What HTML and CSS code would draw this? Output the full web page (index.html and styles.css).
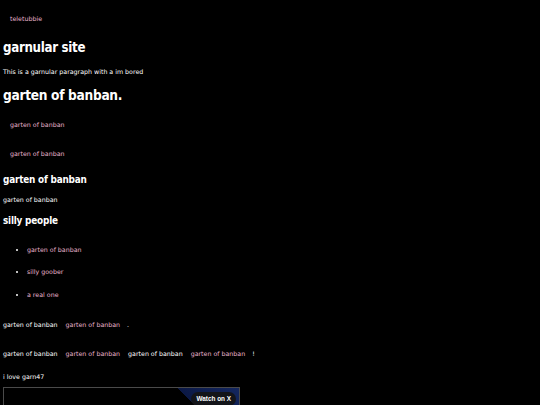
FILE: index.html
```html
<!DOCTYPE html>
<html>
<head>
<meta charset="utf-8">
<link rel="stylesheet" href="styles.css">
</head>
<body>
<nav class="nav"><a class="link" href="#">teletubbie</a></nav>
<h1 class="title">garnular site</h1>
<p class="text p-intro">This is a garnular paragraph with a im bored</p>
<h1 class="title title-2">garten of banban.</h1>
<div class="block block-1"><a class="link" href="#">garten of banban</a></div>
<div class="block block-2"><a class="link" href="#">garten of banban</a></div>
<h2 class="sub">garten of banban</h2>
<p class="text p-after">garten of banban</p>
<h2 class="sub sub-2">silly people</h2>
<ul class="list">
  <li><a class="link" href="#">garten of banban</a></li>
  <li><a class="link" href="#">silly goober</a></li>
  <li><a class="link" href="#">a real one</a></li>
</ul>
<div class="row row-1">
  <span>garten of banban</span>
  <a class="link" href="#">garten of banban</a>
  <span class="mark">.</span>
</div>
<div class="row row-2">
  <span>garten of banban</span>
  <a class="link" href="#">garten of banban</a>
  <span>garten of banban</span>
  <a class="link" href="#">garten of banban</a>
  <span class="mark">!</span>
</div>
<p class="text p-love">i love garn47</p>
<div class="embed">
  <div class="embed-glow"></div>
  <div class="watch">Watch on X</div>
</div>
</body>
</html>
```
FILE: styles.css
```css
html, body {
  margin: 0;
  padding: 0;
  background: #000;
  overflow: hidden;
}
body {
  padding: 0 3px;
  color: #fff;
  font-family: "DejaVu Sans", sans-serif;
  font-size: 6.3px;
  line-height: 9px;
}
.link {
  color: #e8b4cc;
  text-decoration: none;
}
.nav {
  margin-top: 13.5px;
  padding-left: 7px;
  line-height: 9px;
}
.title, .sub {
  font-family: "DejaVu Sans Condensed", "DejaVu Sans", sans-serif;
  font-stretch: condensed;
  font-weight: bold;
}
.title {
  margin: 17.5px 0 0;
  font-size: 13.2px;
  line-height: 16px;
  letter-spacing: -0.3px;
}
.title-2 {
  margin-top: 11.5px;
  font-size: 13.6px;
}
.text {
  margin: 0;
}
.p-intro { margin-top: 10.5px; }
.block {
  padding-left: 7px;
  line-height: 9px;
}
.block-1 { margin-top: 16.5px; }
.block-2 { margin-top: 20px; }
.sub {
  margin: 16.5px 0 0;
  font-size: 9.9px;
  line-height: 12px;
  letter-spacing: -0.2px;
}
.sub-2 { margin-top: 11.5px; }
.p-after { margin-top: 8.5px; }
.list {
  margin: 11.75px 0 0;
  padding-left: 24px;
  line-height: 22.5px;
}
.row {
  display: flex;
  gap: 8px;
  line-height: 9px;
  white-space: nowrap;
}
.row .mark { margin-left: -1px; }
.row-1 { margin-top: 13.25px; }
.row-2 { margin-top: 20px; }
.p-love { margin-top: 14px; }
.embed {
  position: relative;
  margin-top: 6.5px;
  width: 235px;
  height: 130px;
  border: 1px solid #4a4a4a;
  background: #000;
  overflow: hidden;
}
.embed-glow {
  position: absolute;
  top: 0;
  right: 0;
  width: 62px;
  height: 62px;
  background: linear-gradient(45deg, transparent 0, transparent 50%, #0b1844 50.5%, #14275f 100%);
}
.watch {
  position: absolute;
  top: 4px;
  right: 3px;
  padding: 0 5px;
  height: 14px;
  line-height: 13px;
  border-radius: 7px;
  background: rgba(20, 20, 20, 0.9);
  font-family: "Liberation Sans", Arial, sans-serif;
  font-weight: bold;
  font-size: 6.4px;
  color: #fff;
}
```
